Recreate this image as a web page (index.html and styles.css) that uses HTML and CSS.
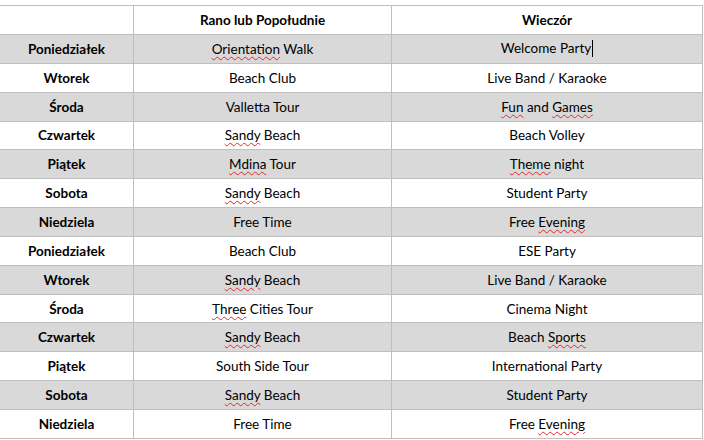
FILE: index.html
```html
<!DOCTYPE html>
<html lang="pl">
<head>
<meta charset="utf-8">
<link rel="stylesheet" href="styles.css">
</head>
<body>
<div class="sheet">
  <div class="grid">
    <div class="c head first"></div>
    <div class="c head"><span>Rano lub Popołudnie</span></div>
    <div class="c head"><span>Wieczór</span></div>

    <div class="c day shade"><span>Poniedziałek</span></div>
    <div class="c shade"><span><span class="sp">Orientation</span> Walk</span></div>
    <div class="c shade"><span>Welcome Party<span class="caret"></span></span></div>

    <div class="c day"><span>Wtorek</span></div>
    <div class="c"><span>Beach Club</span></div>
    <div class="c"><span>Live Band / Karaoke</span></div>

    <div class="c day shade"><span>Środa</span></div>
    <div class="c shade"><span>Valletta Tour</span></div>
    <div class="c shade"><span><span class="sp">Fun</span> and <span class="sp">Games</span></span></div>

    <div class="c day"><span>Czwartek</span></div>
    <div class="c"><span><span class="sp">Sandy</span> Beach</span></div>
    <div class="c"><span>Beach Volley</span></div>

    <div class="c day shade"><span>Piątek</span></div>
    <div class="c shade"><span><span class="sp">Mdina</span> Tour</span></div>
    <div class="c shade"><span><span class="sp">Theme</span> night</span></div>

    <div class="c day"><span>Sobota</span></div>
    <div class="c"><span><span class="sp">Sandy</span> Beach</span></div>
    <div class="c"><span>Student Party</span></div>

    <div class="c day shade"><span>Niedziela</span></div>
    <div class="c shade"><span>Free Time</span></div>
    <div class="c shade"><span>Free <span class="sp">Evening</span></span></div>

    <div class="c day"><span>Poniedziałek</span></div>
    <div class="c"><span>Beach Club</span></div>
    <div class="c"><span>ESE Party</span></div>

    <div class="c day shade"><span>Wtorek</span></div>
    <div class="c shade"><span><span class="sp">Sandy</span> Beach</span></div>
    <div class="c shade"><span>Live Band / Karaoke</span></div>

    <div class="c day"><span>Środa</span></div>
    <div class="c"><span><span class="sp">Three</span> Cities Tour</span></div>
    <div class="c"><span>Cinema Night</span></div>

    <div class="c day shade"><span>Czwartek</span></div>
    <div class="c shade"><span><span class="sp">Sandy</span> Beach</span></div>
    <div class="c shade"><span>Beach <span class="sp">Sports</span></span></div>

    <div class="c day"><span>Piątek</span></div>
    <div class="c"><span>South Side Tour</span></div>
    <div class="c"><span>International Party</span></div>

    <div class="c day shade"><span>Sobota</span></div>
    <div class="c shade"><span><span class="sp">Sandy</span> Beach</span></div>
    <div class="c shade"><span>Student Party</span></div>

    <div class="c day"><span>Niedziela</span></div>
    <div class="c"><span>Free Time</span></div>
    <div class="c"><span>Free <span class="sp">Evening</span></span></div>
  </div>
</div>
</body>
</html>
```
FILE: styles.css
```css
html, body {
  margin: 0;
  padding: 0;
  background: #ffffff;
}
body {
  width: 704px;
  height: 440px;
  overflow: hidden;
  font-family: Lato, "Liberation Sans", sans-serif;
  font-size: 13.5px;
  color: #000000;
}
.sheet {
  padding-top: 5px;
  margin-left: -1px;
}
.grid {
  display: grid;
  grid-template-columns: 134px 258px 311px;
  grid-template-rows: 29px repeat(14, 28.857px);
  border-top: 1px solid #bfbfbf;
  border-left: 1px solid #bfbfbf;
  width: 703px;
}
.c {
  border-right: 1px solid #bfbfbf;
  border-bottom: 1px solid #bfbfbf;
  display: flex;
  align-items: center;
  justify-content: center;
  white-space: nowrap;
  box-sizing: border-box;
}
.head, .day {
  font-weight: bold;
}
.shade {
  background: #d9d9d9;
}
.sp {
  text-decoration: underline wavy #e02b2b;
  text-decoration-thickness: 1px;
  text-underline-offset: 2px;
}
.caret {
  display: inline-block;
  width: 1px;
  height: 17px;
  background: #000;
  margin-left: 1px;
  vertical-align: -4px;
}
```
